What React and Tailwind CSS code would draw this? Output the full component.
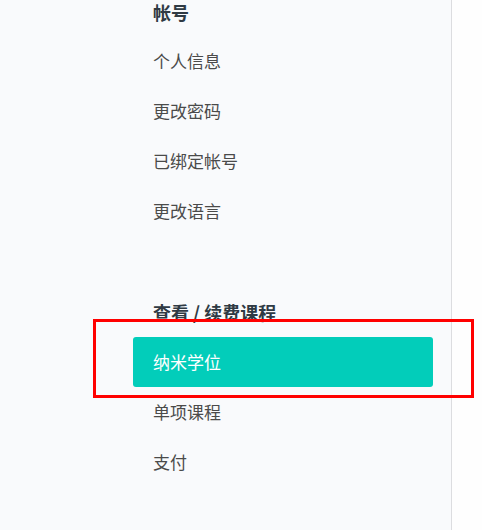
import React from "react";

const accountLinks = ["个人信息", "更改密码", "已绑定帐号", "更改语言"];
const courseLinks = [
  { label: "纳米学位", active: true },
  { label: "单项课程" },
  { label: "支付" },
];

const font = { fontFamily: '"Noto Sans CJK SC", "Noto Sans", sans-serif' };

const App = () => {
  return (
    <div className="relative flex h-[530px] w-[482px] overflow-hidden bg-white" style={font}>
      {/* 侧边栏 */}
      <aside className="w-[452px] shrink-0 border-r border-[#dcdde0] bg-[#f9fafc]">
        <div className="pl-[133px] pr-[18px]">
          <h3 className="h-[24px] pl-[20px] text-[18px] font-bold leading-[24px] text-[#2f3a44]">
            帐号
          </h3>
          <ul className="mt-[12px]">
            {accountLinks.map((item) => (
              <li
                key={item}
                className="flex h-[50px] items-center pl-[20px] text-[17px] text-[#4a4a4a]"
              >
                {item}
              </li>
            ))}
          </ul>

          <h3 className="mt-[51px] flex h-[50px] items-center pl-[20px] text-[18px] font-bold text-[#2f3a44]">
            查看 / 续费课程
          </h3>
          <ul>
            {courseLinks.map((item) =>
              item.active ? (
                <li
                  key={item.label}
                  className="flex h-[50px] w-[300px] items-center rounded-[3px] bg-[#02cdba] pl-[20px] text-[17px] text-white"
                >
                  {item.label}
                </li>
              ) : (
                <li
                  key={item.label}
                  className="flex h-[50px] items-center pl-[20px] text-[17px] text-[#4a4a4a]"
                >
                  {item.label}
                </li>
              )
            )}
          </ul>
        </div>
      </aside>
      <div className="flex-1 bg-[#fefefe]" />

      {/* 标注框 */}
      <div className="pointer-events-none absolute left-[93px] top-[319px] h-[79px] w-[381px] border-[3px] border-[#ff0000]" />
    </div>
  );
};

export default App;
